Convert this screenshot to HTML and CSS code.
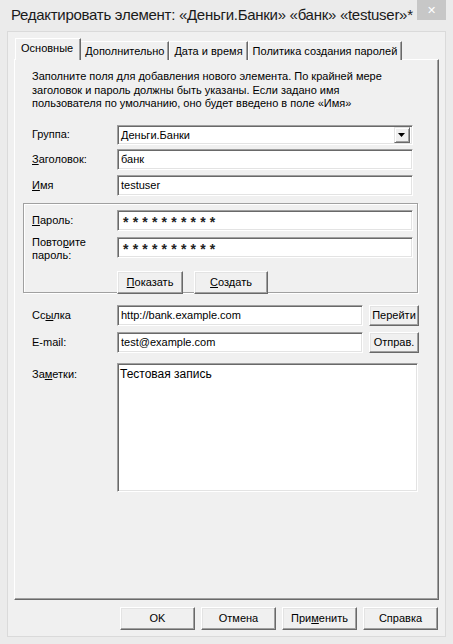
FILE: index.html
```html
<!DOCTYPE html>
<html lang="ru">
<head>
<meta charset="utf-8">
<title>Редактировать элемент</title>
<link rel="stylesheet" href="styles.css">
</head>
<body>
<div class="window">
  <div class="titlebar">
    <span class="title">Редактировать элемент: «Деньги.Банки» «банк» «testuser»*</span>
    <div class="close">✕</div>
  </div>
  <div class="client">
    <div class="tabs">
      <div class="tab active">Основные</div>
      <div class="tab">Дополнительно</div>
      <div class="tab">Дата и время</div>
      <div class="tab">Политика создания паролей</div>
    </div>
    <div class="panel">
      <p class="desc">Заполните поля для добавления нового элемента. По крайней мере<br>заголовок и пароль должны быть указаны. Если задано имя<br>пользователя по умолчанию, оно будет введено в поле «Имя»</p>

      <div class="row row-group">
        <span class="label">Группа:</span>
        <div class="combo">
          <span class="combo-text">Деньги.Банки</span>
          <span class="combo-btn"><svg width="8" height="4" viewBox="0 0 8 4"><path d="M0 0H7L3.5 4Z" fill="#000"/></svg></span>
        </div>
      </div>
      <div class="row row-title">
        <span class="label"><u>З</u>аголовок:</span>
        <div class="field">банк</div>
      </div>
      <div class="row row-user">
        <span class="label"><u>И</u>мя</span>
        <div class="field">testuser</div>
      </div>

      <div class="groupbox">
        <div class="row row-pass">
          <span class="label"><u>П</u>ароль:</span>
          <div class="field pass">**********</div>
        </div>
        <div class="row row-repeat">
          <span class="label">Повто<u>р</u>ите<br>пароль:</span>
          <div class="field pass">**********</div>
        </div>
        <div class="row row-btns">
          <span class="label"></span>
          <button class="btn btn-show"><u>П</u>оказать</button>
          <button class="btn btn-gen"><u>С</u>оздать</button>
        </div>
      </div>

      <div class="row row-url">
        <span class="label">Сс<u>ы</u>лка</span>
        <div class="field field-short">http://bank.example.com</div>
        <button class="btn btn-side">Перейти</button>
      </div>
      <div class="row row-mail">
        <span class="label">E-mail:</span>
        <div class="field field-short">test@example.com</div>
        <button class="btn btn-side">Отправ.</button>
      </div>
      <div class="row row-notes">
        <span class="label">За<u>м</u>етки:</span>
        <div class="notes">Тестовая запись</div>
      </div>
    </div>
    <div class="buttons">
      <button class="btn btn-main">OK</button>
      <button class="btn btn-main">Отмена</button>
      <button class="btn btn-main">При<u>м</u>енить</button>
      <button class="btn btn-main">Справка</button>
    </div>
  </div>
</div>
</body>
</html>
```
FILE: styles.css
```css
* { box-sizing: border-box; }
html, body {
  margin: 0;
  padding: 0;
  background: #ebebeb;
}
body {
  font-family: "Liberation Sans", Arial, sans-serif;
  font-size: 11px;
  color: #000;
}
u { text-decoration: underline; text-underline-offset: 1px; }

.window {
  width: 453px;
  height: 644px;
  background: #ebebeb;
  display: flex;
  flex-direction: column;
}

.titlebar {
  height: 31px;
  display: flex;
  align-items: flex-start;
  justify-content: space-between;
}
.title {
  font-family: "Liberation Sans", Arial, sans-serif;
  font-size: 15px;
  letter-spacing: -0.28px;
  padding: 6px 0 0 11px;
  color: #1a1a1a;
  white-space: nowrap;
}
.close {
  width: 29px;
  height: 20px;
  margin-right: 7px;
  background: #c7c7c7;
  color: #fff;
  font-family: "DejaVu Sans", sans-serif;
  font-size: 11px;
  font-weight: bold;
  display: flex;
  align-items: center;
  justify-content: center;
}

.client {
  margin: 0 7px 7px 7px;
  height: 606px;
  background: #f0f0f0;
  border: 1px solid #dadada;
  padding: 6px 0 0 6px;
}

.tabs {
  display: flex;
  align-items: flex-end;
  height: 22px;
  position: relative;
  z-index: 1;
  margin-bottom: -1px;
}
.tab {
  height: 19px;
  padding: 3px 4px 0 4px;
  border-top: 1px solid #fff;
  border-left: 1px solid #fff;
  border-right: 1px solid #696969;
  box-shadow: inset -1px 0 0 #a0a0a0;
  background: #f0f0f0;
  white-space: nowrap;
  line-height: 13px;
}
.tab.active {
  height: 22px;
  padding: 3px 7px 0 5px;
  margin-left: 1px;
  margin-right: -1px;
  position: relative;
  z-index: 2;
}

.panel {
  width: 425px;
  height: 541px;
  border-top: 1px solid #fff;
  border-left: 1px solid #fff;
  border-right: 1px solid #696969;
  border-bottom: 1px solid #696969;
  box-shadow: inset -1px -1px 0 #a0a0a0;
  padding: 10px 0 0 17px;
}

.desc {
  margin: 0 0 14px 0;
  line-height: 13.6px;
}

.row {
  display: flex;
  align-items: center;
}
.label {
  width: 85px;
  flex: none;
  line-height: 13.5px;
}

.combo {
  width: 296px;
  height: 20px;
  background: #fff;
  border: 1px solid;
  border-color: #a0a0a0 #fff #fff #a0a0a0;
  box-shadow: inset 1px 1px 0 #696969, inset -1px -1px 0 #e3e3e3;
  display: flex;
  align-items: center;
  justify-content: space-between;
  padding: 0 2px 0 3px;
}
.combo-text { line-height: 14px; }
.combo-btn {
  width: 16px;
  height: 16px;
  background: #f0f0f0;
  border-top: 1px solid #e3e3e3;
  border-left: 1px solid #e3e3e3;
  border-right: 1px solid #696969;
  border-bottom: 1px solid #696969;
  box-shadow: inset 1px 1px 0 #fff, inset -1px -1px 0 #a0a0a0;
  display: flex;
  align-items: center;
  justify-content: center;
  padding-top: 1px;
}

.field {
  width: 296px;
  height: 21px;
  background: #fff;
  border: 1px solid;
  border-color: #a0a0a0 #fff #fff #a0a0a0;
  box-shadow: inset 1px 1px 0 #696969, inset -1px -1px 0 #e3e3e3;
  padding: 2px 0 0 3px;
  line-height: 14px;
  white-space: nowrap;
}
.field.pass {
  font-size: 14px;
  font-weight: bold;
  letter-spacing: 4.2px;
  padding: 4px 0 0 5px;
  line-height: 14px;
  color: #222;
}
.field-short { width: 246px; }

.row-title { margin-top: 4px; }
.row-user { margin-top: 5px; }

.groupbox {
  margin: 7px 0 0 -9px;
  width: 395px;
  height: 90px;
  border: 1px solid #a0a0a0;
  box-shadow: inset 1px 1px 0 #fff, 1px 1px 0 #fff;
  padding: 6px 0 0 8px;
}
.row-repeat { margin-top: 6px; align-items: flex-start; }
.row-repeat .label { margin-top: -1px; }
.row-btns { margin-top: 8px; }

.btn {
  font-family: "Liberation Sans", Arial, sans-serif;
  font-size: 11px;
  color: #000;
  height: 23px;
  padding: 0;
  background: #f0f0f0;
  border-top: 1px solid #fff;
  border-left: 1px solid #fff;
  border-right: 1px solid #696969;
  border-bottom: 1px solid #696969;
  box-shadow: inset -1px -1px 0 #a0a0a0, inset 1px 1px 0 #e3e3e3;
  border-radius: 0;
  line-height: 13px;
}
.btn-show { width: 66px; }
.btn-gen { width: 74px; margin-left: 11px; }
.btn-side { width: 50px; height: 21px; margin-left: 6px; }

.row-url { margin-top: 12px; }
.row-mail { margin-top: 6px; }
.row-notes { margin-top: 10px; align-items: flex-start; }
.row-notes .label { margin-top: 5px; }

.notes {
  width: 301px;
  height: 129px;
  background: #fff;
  border: 1px solid;
  border-color: #a0a0a0 #fff #fff #a0a0a0;
  box-shadow: inset 1px 1px 0 #696969, inset -1px -1px 0 #e3e3e3;
  padding: 3px 0 0 2px;
  font-size: 12px;
  line-height: 15px;
}

.buttons {
  display: flex;
  justify-content: flex-end;
  gap: 6px;
  width: 424px;
  margin-top: 7px;
}
.btn-main { width: 75px; }
```
